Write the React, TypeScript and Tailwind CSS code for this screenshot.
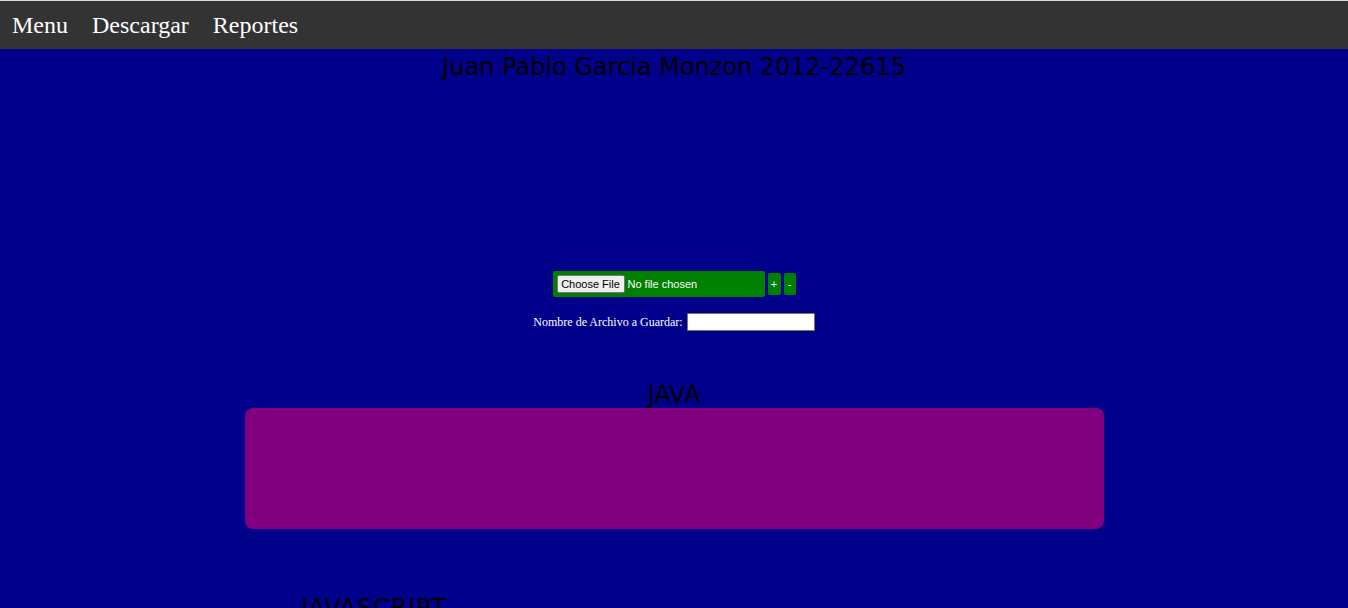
import React from "react";

const serif = "font-['Liberation_Serif','Times_New_Roman',serif]";
const sans = "font-['DejaVu_Sans',Verdana,sans-serif]";
const arial = "font-['Liberation_Sans',Arial,sans-serif]";

const NavBar = () => {
  return (
    <div className="border-t border-[#d9d9d9] bg-[#333333] h-[49px] flex items-center">
      {["Menu", "Descargar", "Reportes"].map((item) => (
        <a key={item} className={`${serif} px-3 text-[24px] leading-normal text-white`}>
          {item}
        </a>
      ))}
    </div>
  );
};

const FileLoader = () => {
  return (
    <div className="flex items-center justify-center gap-[3px]">
      <div className="w-[212px] h-[26px] bg-[#008000] rounded-[2px] flex items-center pl-1">
        <span
          className={`${arial} h-[18px] w-[68px] flex items-center justify-center bg-[#efefef] border border-[#767676] rounded-[2px] text-[11px] text-black`}
        >
          Choose File
        </span>
        <span className={`${arial} ml-[3px] text-[11px] text-white`}>No file chosen</span>
      </div>
      <button
        className={`${arial} w-[13px] h-[22px] bg-[#008000] rounded-[2px] text-[11px] text-white flex items-center justify-center`}
      >
        +
      </button>
      <button
        className={`${arial} w-[12px] h-[22px] bg-[#008000] rounded-[2px] text-[11px] text-white flex items-center justify-center`}
      >
        -
      </button>
    </div>
  );
};

export default function App() {
  return (
    <div className="w-[1348px] h-[608px] overflow-hidden bg-[#00008b]">
      <NavBar />
      <h1 className={`${sans} text-center text-[24px] leading-normal text-black`}>
        Juan Pablo Garcia Monzon 2012-22615
      </h1>

      <div className="mt-[186px]">
        <FileLoader />
        <div className="mt-4 flex items-center justify-center gap-1">
          <span className={`${serif} text-[12px] text-white`}>Nombre de Archivo a Guardar:</span>
          <input
            type="text"
            className="w-[128px] h-[18px] bg-white border border-[#767676] rounded-[1px]"
          />
        </div>
      </div>

      <h2 className={`${sans} mt-[51px] text-center text-[24px] leading-[26px] text-black`}>
        JAVA
      </h2>
      <div className="mx-auto w-[859px] h-[121px] bg-[#800080] rounded-lg" />

      <h2 className={`${sans} mt-[61px] ml-[301px] text-[24px] leading-normal tracking-[0.8px] text-black`}>
        JAVASCRIPT
      </h2>
    </div>
  );
}
